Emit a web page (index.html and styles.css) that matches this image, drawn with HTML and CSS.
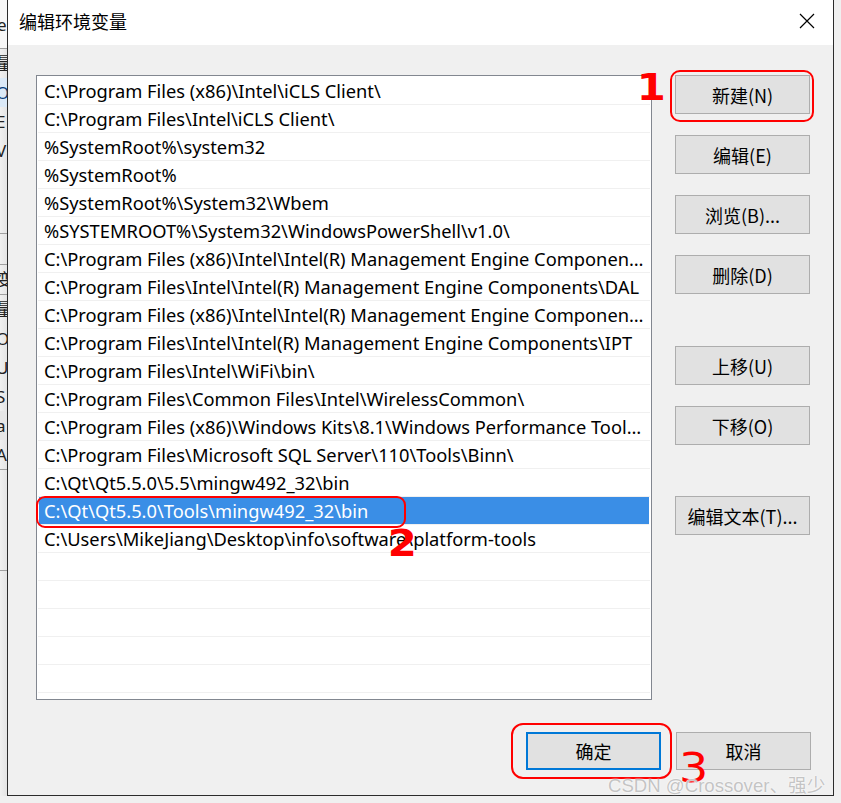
FILE: index.html
```html
<!DOCTYPE html>
<html lang="zh-CN">
<head>
<meta charset="utf-8">
<title>编辑环境变量</title>
<link rel="stylesheet" href="styles.css">
</head>
<body>
<div class="desktop">
  <div class="backwin">
    <div class="bw-title">e</div>
    <div class="bw-line"></div>
    <div class="bw-item">量</div>
    <div class="bw-item sel">O</div>
    <div class="bw-item">E</div>
    <div class="bw-item">V</div>
    <div class="bw-gap"></div>
    <div class="bw-line"></div>
    <div class="bw-gap2"></div>
    <div class="bw-line"></div>
    <div class="bw-item">变</div>
    <div class="bw-line"></div>
    <div class="bw-item">量</div>
    <div class="bw-item">O</div>
    <div class="bw-item">U</div>
    <div class="bw-item">S</div>
    <div class="bw-item sel2">a</div>
    <div class="bw-item">A</div>
    <div class="bw-line"></div>
    <div class="bw-gap3"></div>
    <div class="bw-line"></div>
  </div>

  <div class="dialog">
    <div class="titlebar">
      <span class="title">编辑环境变量</span>
      <svg class="close" width="16" height="16" viewBox="0 0 16 16"><path d="M1 1 L15 15 M15 1 L1 15" stroke="#000" stroke-width="1.2" fill="none"/></svg>
    </div>
    <div class="body">
      <div class="main">
        <div class="list">
          <div class="row">C:\Program Files (x86)\Intel\iCLS Client\</div>
          <div class="row">C:\Program Files\Intel\iCLS Client\</div>
          <div class="row">%SystemRoot%\system32</div>
          <div class="row">%SystemRoot%</div>
          <div class="row">%SystemRoot%\System32\Wbem</div>
          <div class="row">%SYSTEMROOT%\System32\WindowsPowerShell\v1.0\</div>
          <div class="row">C:\Program Files (x86)\Intel\Intel(R) Management Engine Components\DAL</div>
          <div class="row">C:\Program Files\Intel\Intel(R) Management Engine Components\DAL</div>
          <div class="row">C:\Program Files (x86)\Intel\Intel(R) Management Engine Components\IPT</div>
          <div class="row">C:\Program Files\Intel\Intel(R) Management Engine Components\IPT</div>
          <div class="row">C:\Program Files\Intel\WiFi\bin\</div>
          <div class="row">C:\Program Files\Common Files\Intel\WirelessCommon\</div>
          <div class="row">C:\Program Files (x86)\Windows Kits\8.1\Windows Performance Toolkit\</div>
          <div class="row">C:\Program Files\Microsoft SQL Server\110\Tools\Binn\</div>
          <div class="row">C:\Qt\Qt5.5.0\5.5\mingw492_32\bin</div>
          <div class="row selected">C:\Qt\Qt5.5.0\Tools\mingw492_32\bin</div>
          <div class="row">C:\Users\MikeJiang\Desktop\info\software\platform-tools</div>
          <div class="row"></div>
          <div class="row"></div>
          <div class="row"></div>
          <div class="row"></div>
          <div class="row"></div>
        </div>
        <div class="side">
          <button class="btn">新建(N)</button>
          <button class="btn">编辑(E)</button>
          <button class="btn">浏览(B)...</button>
          <button class="btn">删除(D)</button>
          <button class="btn gap">上移(U)</button>
          <button class="btn">下移(O)</button>
          <button class="btn gap2">编辑文本(T)...</button>
        </div>
      </div>
      <div class="footer">
        <button class="btn default">确定</button>
        <button class="btn">取消</button>
      </div>
    </div>
  </div>

  <div class="mark mark1"></div>
  <div class="mark mark2"></div>
  <div class="mark mark3"></div>
  <span class="num num1">1</span>
  <span class="num num2">2</span>
  <span class="num num3">3</span>
  <span class="watermark">CSDN @Crossover、强少</span>
</div>
</body>
</html>
```

FILE: styles.css
```css
html, body {
  margin: 0;
  padding: 0;
}
body {
  background: #f0f0f0;
  font-family: "Noto Sans", "Noto Sans CJK SC", sans-serif;
  width: 841px;
  height: 803px;
  overflow: hidden;
}
.desktop {
  position: relative;
  width: 841px;
  height: 803px;
  background: #f0f0f0;
}

/* window behind the dialog */
.backwin {
  position: absolute;
  left: 0;
  top: 0;
  width: 7px;
  height: 796px;
  overflow: hidden;
  background: linear-gradient(to right, #f0f0f0, #e4e4e4);
  font-size: 17px;
  color: #222;
  font-family: "Noto Sans", "Noto Sans CJK SC", sans-serif;
}
.bw-title {
  height: 48px;
  line-height: 50px;
  background: #f7f7f7;
  margin-left: -3px;
}
.bw-line {
  height: 1px;
  background: #a0a0a0;
}
.bw-item {
  height: 29px;
  line-height: 29px;
  margin-left: -4px;
}
.bw-item.sel { background: #dbe9f7; color: #0a3d7a; }
.bw-item.sel2 { background: #e6e6e6; }
.bw-gap { height: 68px; }
.bw-gap2 { height: 30px; }
.bw-gap3 { height: 100px; }

/* dialog */
.dialog {
  position: absolute;
  left: 7px;
  top: 0;
  width: 825px;
  height: 795px;
  border: 1px solid #2b2b2b;
  border-top: none;
  background: #f0f0f0;
  display: flex;
  flex-direction: column;
}
.titlebar {
  height: 45px;
  background: #fff;
  display: flex;
  align-items: center;
  justify-content: space-between;
  padding: 0 18px 0 11px;
  flex: none;
}
.title {
  font-family: "Noto Sans CJK SC", sans-serif;
  font-size: 18px;
  color: #000;
  margin-top: -3px;
}
.close {
  margin-top: -3px;
}
.body {
  flex: 1;
  display: flex;
  flex-direction: column;
  padding: 30px 22px 0 28px;
}
.main {
  display: flex;
  gap: 23px;
}
.list {
  width: 612px;
  height: 622px;
  border: 1px solid #828790;
  background: #fff;
  padding: 1px 1px 0 1px;
  overflow: hidden;
  flex: none;
}
.row {
  box-sizing: border-box;
  height: 28px;
  border-bottom: 1px solid #f0f0f0;
  padding: 0 5px 0 6px;
  line-height: 27px;
  font-size: 18.3px;
  color: #000;
  white-space: nowrap;
  overflow: hidden;
  text-overflow: ellipsis;
  font-family: "Noto Sans", sans-serif;
}
.row.selected {
  background: #3a8ee6;
  color: #fff;
  margin: 0 1px;
  padding-left: 5px;
}
.side {
  display: flex;
  flex-direction: column;
  gap: 21px;
  padding-top: 0;
}
.btn {
  box-sizing: border-box;
  width: 135px;
  height: 39px;
  border: 1px solid #adadad;
  background: #e1e1e1;
  font-family: "Noto Sans CJK SC", sans-serif;
  font-size: 18px;
  color: #000;
  padding: 0;
  margin: 0;
}
.btn.gap { margin-top: 31px; }
.btn.gap2 { margin-top: 30px; }
.footer {
  display: flex;
  justify-content: flex-end;
  gap: 15px;
  margin-top: 32px;
}
.footer .btn { height: 38px; }
.btn.default {
  border: 2px solid #0078d7;
}

/* red annotations */
.mark {
  position: absolute;
  border: 2px solid #f00;
  border-radius: 10px;
}
.mark1 { left: 670px; top: 70px; width: 140px; height: 48px; }
.mark2 { left: 36px; top: 496px; width: 366px; height: 28px; border-radius: 9px; }
.mark3 { left: 511px; top: 723px; width: 157px; height: 52px; border-radius: 12px; }
.num {
  position: absolute;
  color: #f00;
  line-height: 1;
}
.num1 {
  left: 638px;
  top: 68px;
  font-family: "DejaVu Sans", sans-serif;
  font-weight: bold;
  font-size: 38px;
  transform: scaleX(1.1);
}
.num2 {
  left: 389px;
  top: 524px;
  font-family: "DejaVu Sans", sans-serif;
  font-size: 38px;
  font-weight: bold;
  transform: scaleX(1.1);
}
.num3 {
  left: 681px;
  top: 748px;
  font-family: "DejaVu Sans", sans-serif;
  font-size: 40px;
  transform: scaleX(1.15);
}
.watermark {
  position: absolute;
  left: 608px;
  top: 770px;
  font-family: "Liberation Sans", "Noto Sans CJK SC", sans-serif;
  font-size: 18.6px;
  color: #c4c4c4;
  text-shadow: 0 0 1px #fff, 0 0 2px #fff;
  white-space: nowrap;
}
```
